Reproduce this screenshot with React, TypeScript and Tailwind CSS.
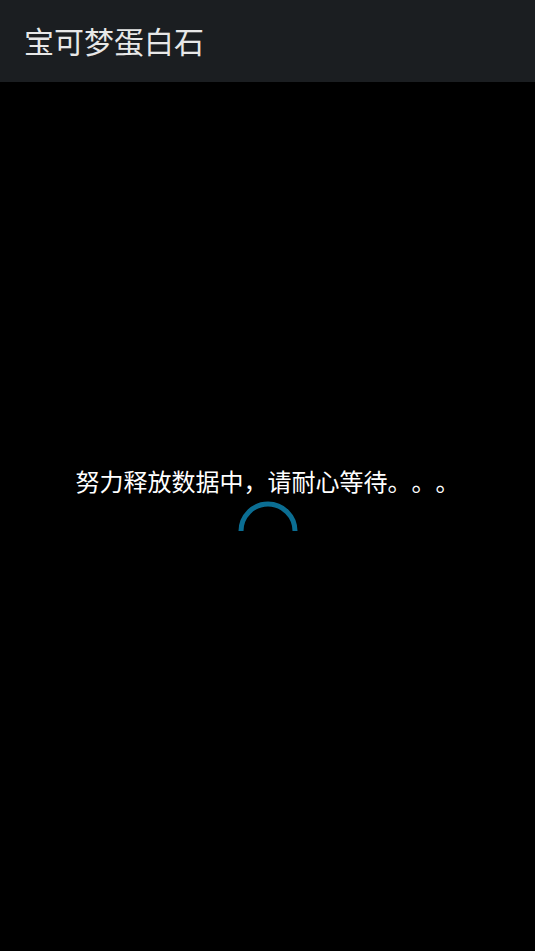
export default function App() {
  return (
    <div
      className="flex h-[951px] w-full flex-col bg-black [text-spacing-trim:space-all]"
      style={{ fontFamily: '"Noto Sans CJK SC", sans-serif' }}
    >
      {/* Title bar */}
      <header className="flex h-[82px] shrink-0 items-center bg-[#1b1e21] px-[24px] pb-[2px]">
        <h1 className="text-[30px] leading-none text-[#e8e8e8]">宝可梦蛋白石</h1>
      </header>

      {/* Loading area */}
      <main className="flex flex-1 flex-col items-center justify-center pb-[7px]">
        <p className="text-[24px] leading-[30px] text-white">努力释放数据中，请耐心等待。。。</p>
        <svg className="mt-[5px] h-[60px] w-[60px]" viewBox="0 0 60 60">
          <path
            d="M 3 30 A 27 27 0 0 1 57 30"
            fill="none"
            stroke="#0b6e93"
            strokeWidth={5}
          />
        </svg>
      </main>
    </div>
  );
}
